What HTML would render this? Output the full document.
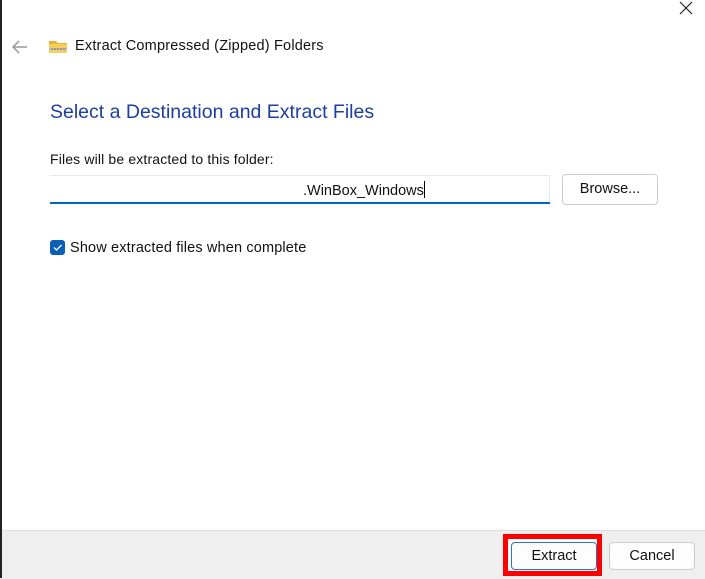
<!DOCTYPE html>
<html><head><style>
body{margin:0;width:705px;height:578px;background:#fff;position:relative;overflow:hidden;font-family:"Liberation Sans",sans-serif;color:#000}
.a{position:absolute;white-space:nowrap}
</style></head><body>
<div class="a" style="left:0;top:0;width:2px;height:578px;background:#222"></div>
<svg class="a" style="left:676px;top:0" width="18" height="18" viewBox="0 0 18 18"><path d="M4 2L16 14M16 2L4 14" stroke="#222" stroke-width="1.2" fill="none"/></svg>
<svg class="a" style="left:11px;top:39px" width="18" height="16" viewBox="0 0 18 16"><path d="M16 8H2M8 2L2 8L8 14" stroke="#999" stroke-width="1.5" fill="none"/></svg>
<svg class="a" style="left:49px;top:40px" width="18" height="13" viewBox="0 0 18 13"><path d="M0 1h7l2 2h9v10H0z" fill="#e8b53a"/><rect x="0" y="4" width="18" height="9" fill="#f6cf5a"/><rect x="0" y="8" width="18" height="2" fill="#bbb"/><path d="M3 8v2M6 8v2M9 8v2M12 8v2M15 8v2" stroke="#777" stroke-width="1"/></svg>
<div class="a" style="left:75px;top:38px;font-size:14.5px;letter-spacing:0.2px;color:#111">Extract Compressed (Zipped) Folders</div>
<div class="a" style="left:50px;top:101px;font-size:19.5px;color:#1c3ea0">Select a Destination and Extract Files</div>
<div class="a" style="left:50px;top:151px;font-size:14px;letter-spacing:0.15px;color:#111">Files will be extracted to this folder:</div>
<div class="a" style="left:50px;top:175px;width:500px;height:27px;border-top:1px solid #e8e8e8;border-right:1px solid #e8e8e8;box-sizing:border-box"></div>
<div class="a" style="left:50px;top:202px;width:500px;height:2px;background:#0067c0"></div>
<div class="a" style="left:303px;top:181px;font-size:14.5px;color:#111">.WinBox_Windows<span style="display:inline-block;width:1px;height:17px;background:#000;vertical-align:-3px"></span></div>
<div class="a" style="left:562px;top:174px;width:96px;height:31px;border:1px solid #ccc;border-radius:4px;box-sizing:border-box;font-size:14.5px;text-align:center;line-height:29px;color:#111">Browse...</div>
<div class="a" style="left:50px;top:240px;width:15px;height:15px;background:#0a5fb4;border-radius:3px"></div>
<svg class="a" style="left:50px;top:240px" width="15" height="15" viewBox="0 0 15 15"><path d="M4 7.5l2.5 2.5 5-5" stroke="#fff" stroke-width="1.3" fill="none"/></svg>
<div class="a" style="left:70px;top:240px;font-size:14.5px;letter-spacing:0.15px;color:#111">Show extracted files when complete</div>
<div class="a" style="left:2px;top:530px;width:703px;height:48px;background:#efefef;border-top:1px solid #ddd"></div>
<div class="a" style="left:503px;top:534px;width:99px;height:42px;background:#f00"></div>
<div class="a" style="left:508px;top:539px;width:89px;height:32px;background:#fff"></div>
<div class="a" style="left:511px;top:542px;width:86px;height:28px;border:1px solid #2a73c5;border-radius:4px;box-sizing:border-box;background:#fdfdfd;font-size:14.5px;text-align:center;line-height:26px;color:#111">Extract</div>
<div class="a" style="left:609px;top:542px;width:86px;height:28px;border:1px solid #ccc;border-radius:4px;box-sizing:border-box;background:#fdfdfd;font-size:14.5px;text-align:center;line-height:26px;color:#111">Cancel</div>
</body></html>
